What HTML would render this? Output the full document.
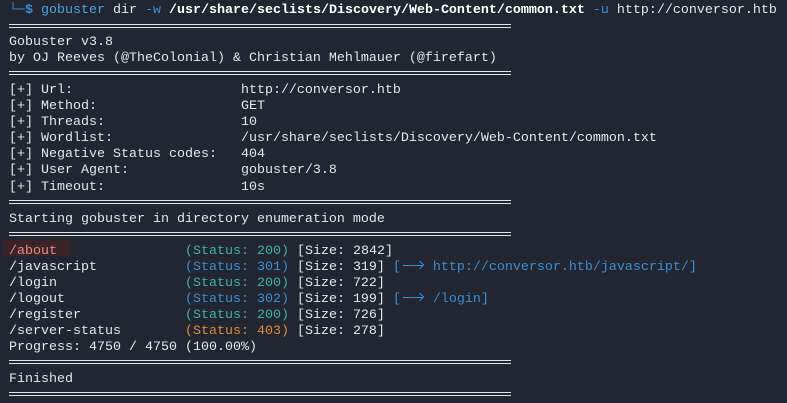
<!DOCTYPE html>
<html><head><style>
body{margin:0;background:#222631;width:787px;height:403px;overflow:hidden;}
pre{margin:0;position:absolute;left:9px;top:3px;font-family:"Liberation Mono",monospace;font-size:13.33px;line-height:16.05px;color:#e4e6ea;}
.sep{position:absolute;left:9px;width:502px;height:1px;background:#e4e6ea;}
.b{color:#3b8ed8}.g{color:#3fb39a}.o{color:#e0893c}.p{color:#4aa3e0}.w{font-weight:bold;color:#fff}
.hl{position:absolute;left:3px;top:240px;width:67px;height:16px;background:#3a2329;}
.ab{color:#e98a80}
.ar{display:inline-block;width:24px;height:10px;position:relative;vertical-align:baseline}
.ar:before{content:"";position:absolute;left:2px;right:3px;top:5px;height:1px;background:#3b8ed8}
.ar:after{content:"";position:absolute;right:2px;top:2px;width:5px;height:5px;border-top:1px solid #3b8ed8;border-right:1px solid #3b8ed8;transform:rotate(45deg)}
</style></head><body>
<div class="hl"></div>
<div class="sep" style="top:24px"></div><div class="sep" style="top:27px"></div>
<div class="sep" style="top:71px"></div><div class="sep" style="top:74px"></div>
<div class="sep" style="top:200px"></div><div class="sep" style="top:203px"></div>
<div class="sep" style="top:232px"></div><div class="sep" style="top:235px"></div>
<div class="sep" style="top:360px"></div><div class="sep" style="top:363px"></div>
<div class="sep" style="top:392px"></div><div class="sep" style="top:395px"></div>
<pre><span class="b">└─</span><span class="b w" style="color:#3b8ed8">$</span> <span class="p">gobuster</span> dir <span class="b">-w</span> <span class="w">/usr/share/seclists/Discovery/Web-Content/common.txt</span> <span class="b">-u</span> http://conversor.htb

Gobuster v3.8
by OJ Reeves (@TheColonial) &amp; Christian Mehlmauer (@firefart)

[+] Url:                     http://conversor.htb
[+] Method:                  GET
[+] Threads:                 10
[+] Wordlist:                /usr/share/seclists/Discovery/Web-Content/common.txt
[+] Negative Status codes:   404
[+] User Agent:              gobuster/3.8
[+] Timeout:                 10s

Starting gobuster in directory enumeration mode

<span class="ab">/about</span>                <span class="g">(Status: 200)</span> [Size: 2842]
/javascript           <span class="b">(Status: 301)</span> [Size: 319] <span class="b">[<span class="ar"></span> http://conversor.htb/javascript/]</span>
/login                <span class="g">(Status: 200)</span> [Size: 722]
/logout               <span class="b">(Status: 302)</span> [Size: 199] <span class="b">[<span class="ar"></span> /login]</span>
/register             <span class="g">(Status: 200)</span> [Size: 726]
/server-status        <span class="o">(Status: 403)</span> [Size: 278]
Progress: 4750 / 4750 (100.00%)

Finished
</pre>
</body></html>
